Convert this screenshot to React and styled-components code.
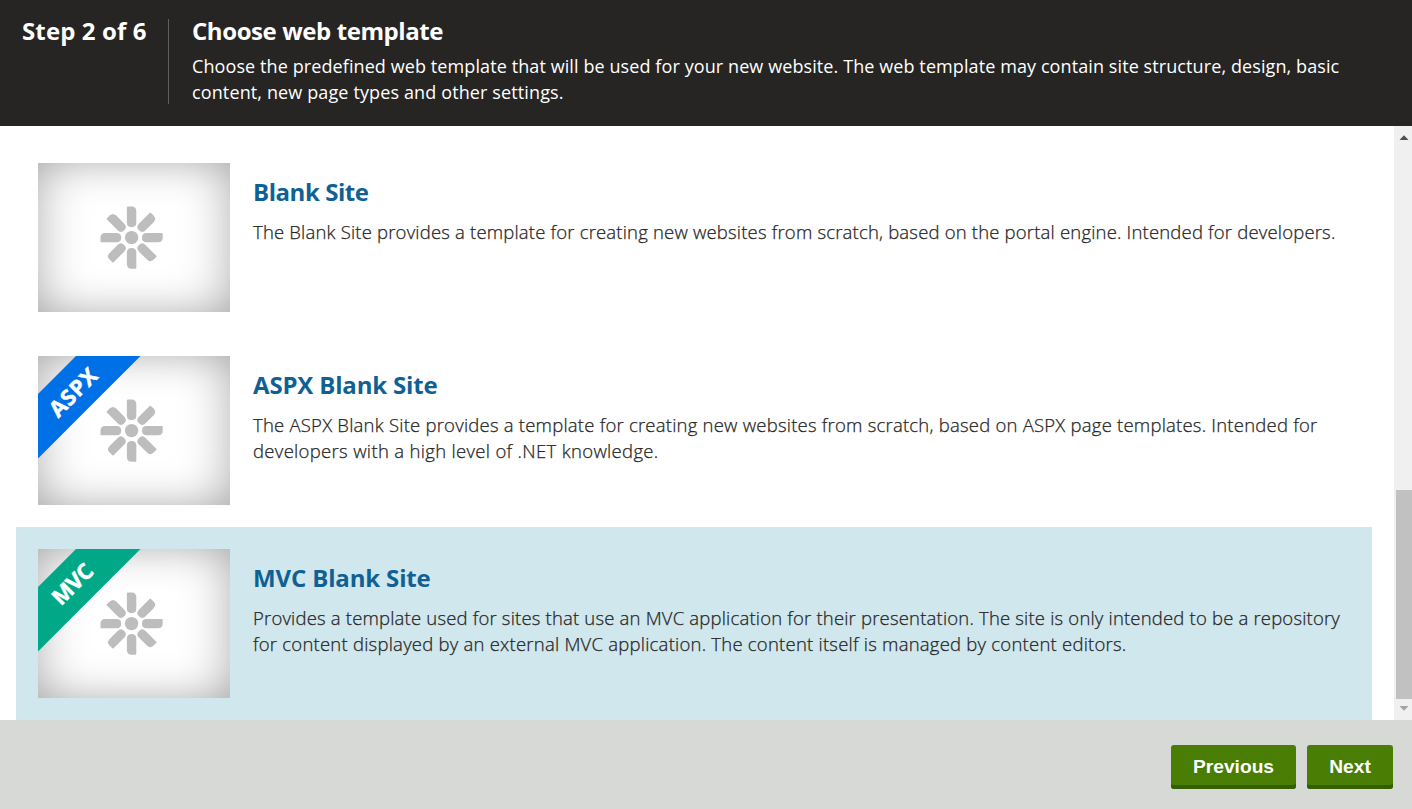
import React from 'react';
import styled, { createGlobalStyle } from 'styled-components';

const Global = createGlobalStyle`
  * { box-sizing: border-box; }
  body { margin: 0; background: #fff; font-family: "Open Sans", "Noto Sans", sans-serif; }
  h1, h2, p { margin: 0; }
`;

const Page = styled.div`
  width: 1412px;
  height: 809px;
  display: flex;
  flex-direction: column;
  overflow: hidden;
`;

const Header = styled.header`
  height: 126px;
  flex: none;
  display: flex;
  align-items: flex-start;
  padding-top: 19px;
  background: #262524;
  color: #fff;
`;

const Step = styled.div`
  width: 169px;
  height: 85px;
  padding-left: 22px;
  border-right: 1px solid #62605f;
  font-size: 24px;
  line-height: 24px;
  font-weight: 700;
  white-space: nowrap;
`;

const Intro = styled.div`
  padding-left: 23px;
`;

const Line = styled.span`
  display: block;
  width: max-content;
  white-space: nowrap;
  letter-spacing: ${(p) => p.$tracking || 0}px;
`;

const HeaderTitle = styled.h1`
  font-size: 24px;
  line-height: 24px;
  font-weight: 700;
`;

const HeaderText = styled.p`
  margin-top: 10px;
  font-size: 18px;
  line-height: 26px;
`;

const Body = styled.main`
  height: 594px;
  flex: none;
  display: flex;
  justify-content: space-between;
`;

const List = styled.div`
  width: 1372px;
  padding: 15px 0 0 16px;
  overflow: hidden;
`;

const Item = styled.article`
  height: 193px;
  display: flex;
  gap: 23px;
  padding: 22px 0 0 22px;
  background: ${(p) => (p.$selected ? '#d0e7ed' : 'transparent')};
`;

const Thumb = styled.svg`
  display: block;
  flex: none;
  width: 192px;
  height: 149px;
`;

const ItemTitle = styled.h2`
  margin-top: 16px;
  font-size: 24px;
  line-height: 26px;
  font-weight: 700;
  color: #0f6194;
`;

const ItemText = styled.p`
  margin-top: 14px;
  font-size: 18.5px;
  line-height: 26px;
  font-weight: 300;
  color: #262524;
  -webkit-text-stroke: 0.25px #262524;
`;

const Scrollbar = styled.div`
  width: 18px;
  display: flex;
  flex-direction: column;
  align-items: flex-end;
  justify-content: space-between;
  background: #f0f0f0;
`;

const Arrow = styled.svg`
  display: block;
  width: 16px;
  height: 21px;
`;

const ScrollHandle = styled.div`
  width: 16px;
  height: 209px;
  margin-top: auto;
  background: #c1c1c1;
`;

const Footer = styled.footer`
  flex: 1;
  display: flex;
  justify-content: flex-end;
  align-items: flex-start;
  gap: 11px;
  padding: 25px 19px 0 0;
  background: #d6d9d6;
`;

const Button = styled.button`
  width: ${(p) => p.$width}px;
  height: 44px;
  padding: 0;
  border: 0;
  border-radius: 3px;
  background: #497d04;
  box-shadow: inset 0 -4px 0 #326000;
  color: #fff;
  font: 700 19.2px/42px "Liberation Sans", sans-serif;
`;

const petal = 'M-4.7-30.2q0-.9.9-.9H0q4.7 0 4.7 4.7V-15q0 4.6-4.7 4.6t-4.7-4.6z';

function Preview({ id, ribbon }) {
  return (
    <Thumb viewBox="0 0 192 149">
      <defs>
        <filter id={`${id}-glow`} filterUnits="userSpaceOnUse" x="-80" y="-80" width="352" height="309">
          <feGaussianBlur stdDeviation="25 21" />
        </filter>
      </defs>
      <rect width="192" height="149" fill="#a8a8a8" />
      <rect x="-2" y="-2" width="196" height="153" rx="24" fill="#fff" filter={`url(#${id}-glow)`} />
      <g transform="translate(93.6 74.6)" fill="#bdbdbd">
        <circle r="6.7" />
        {[0, 45, 90, 135, 180, 225, 270, 315].map((a) => (
          <path key={a} d={petal} transform={`rotate(${a})`} />
        ))}
      </g>
      {ribbon && (
        <>
          <path d="M38 0H102.5L0 102.5V38z" fill={ribbon.color} />
          <text
            transform={`translate(${ribbon.x} ${ribbon.y}) rotate(-45)`}
            fill="#fff"
            stroke="#fff"
            strokeWidth="0.5"
            fontFamily="Open Sans, sans-serif"
            fontWeight="700"
            fontSize="22"
            textLength={ribbon.length}
          >
            {ribbon.label}
          </text>
        </>
      )}
    </Thumb>
  );
}

const templates = [
  {
    id: 'blank',
    title: 'Blank Site',
    titleTracking: -0.45,
    lines: [
      ['The Blank Site provides a template for creating new websites from scratch, based on the portal engine. Intended for developers.', 0.184],
    ],
  },
  {
    id: 'aspx',
    title: 'ASPX Blank Site',
    titleTracking: -0.17,
    ribbon: { label: 'ASPX', color: '#0070e6', x: 20.2, y: 62.4, length: 58 },
    lines: [
      ['The ASPX Blank Site provides a template for creating new websites from scratch, based on ASPX page templates. Intended for', 0.22],
      ['developers with a high level of .NET knowledge.', 0.32],
    ],
  },
  {
    id: 'mvc',
    title: 'MVC Blank Site',
    titleTracking: -0.15,
    selected: true,
    ribbon: { label: 'MVC', color: '#00a887', x: 23, y: 57.4, length: 48 },
    lines: [
      ['Provides a template used for sites that use an MVC application for their presentation. The site is only intended to be a repository', 0.184],
      ['for content displayed by an external MVC application. The content itself is managed by content editors.', 0.228],
    ],
  },
];

export default function App() {
  return (
    <>
      <Global />
      <Page>
        <Header>
          <Step><Line $tracking={0.12}>Step 2 of 6</Line></Step>
          <Intro>
            <HeaderTitle><Line $tracking={-0.42}>Choose web template</Line></HeaderTitle>
            <HeaderText>
              <Line $tracking={0.094}>Choose the predefined web template that will be used for your new website. The web template may contain site structure, design, basic</Line>
              <Line $tracking={0.125}>content, new page types and other settings.</Line>
            </HeaderText>
          </Intro>
        </Header>
        <Body>
          <List>
            {templates.map((t) => (
              <Item key={t.id} $selected={t.selected}>
                <Preview id={t.id} ribbon={t.ribbon} />
                <div>
                  <ItemTitle><Line $tracking={t.titleTracking}>{t.title}</Line></ItemTitle>
                  <ItemText>
                    {t.lines.map(([text, tracking]) => (
                      <Line key={text} $tracking={tracking}>{text}</Line>
                    ))}
                  </ItemText>
                </div>
              </Item>
            ))}
          </List>
          <Scrollbar>
            <Arrow viewBox="0 0 16 21"><path d="M3.5 14 8 9.3 12.5 14z" fill="#505050" /></Arrow>
            <ScrollHandle />
            <Arrow viewBox="0 0 16 21"><path d="M3.5 7 8 11.7 12.5 7z" fill="#a3a3a3" /></Arrow>
          </Scrollbar>
        </Body>
        <Footer>
          <Button $width={125}>Previous</Button>
          <Button $width={86}>Next</Button>
        </Footer>
      </Page>
    </>
  );
}
